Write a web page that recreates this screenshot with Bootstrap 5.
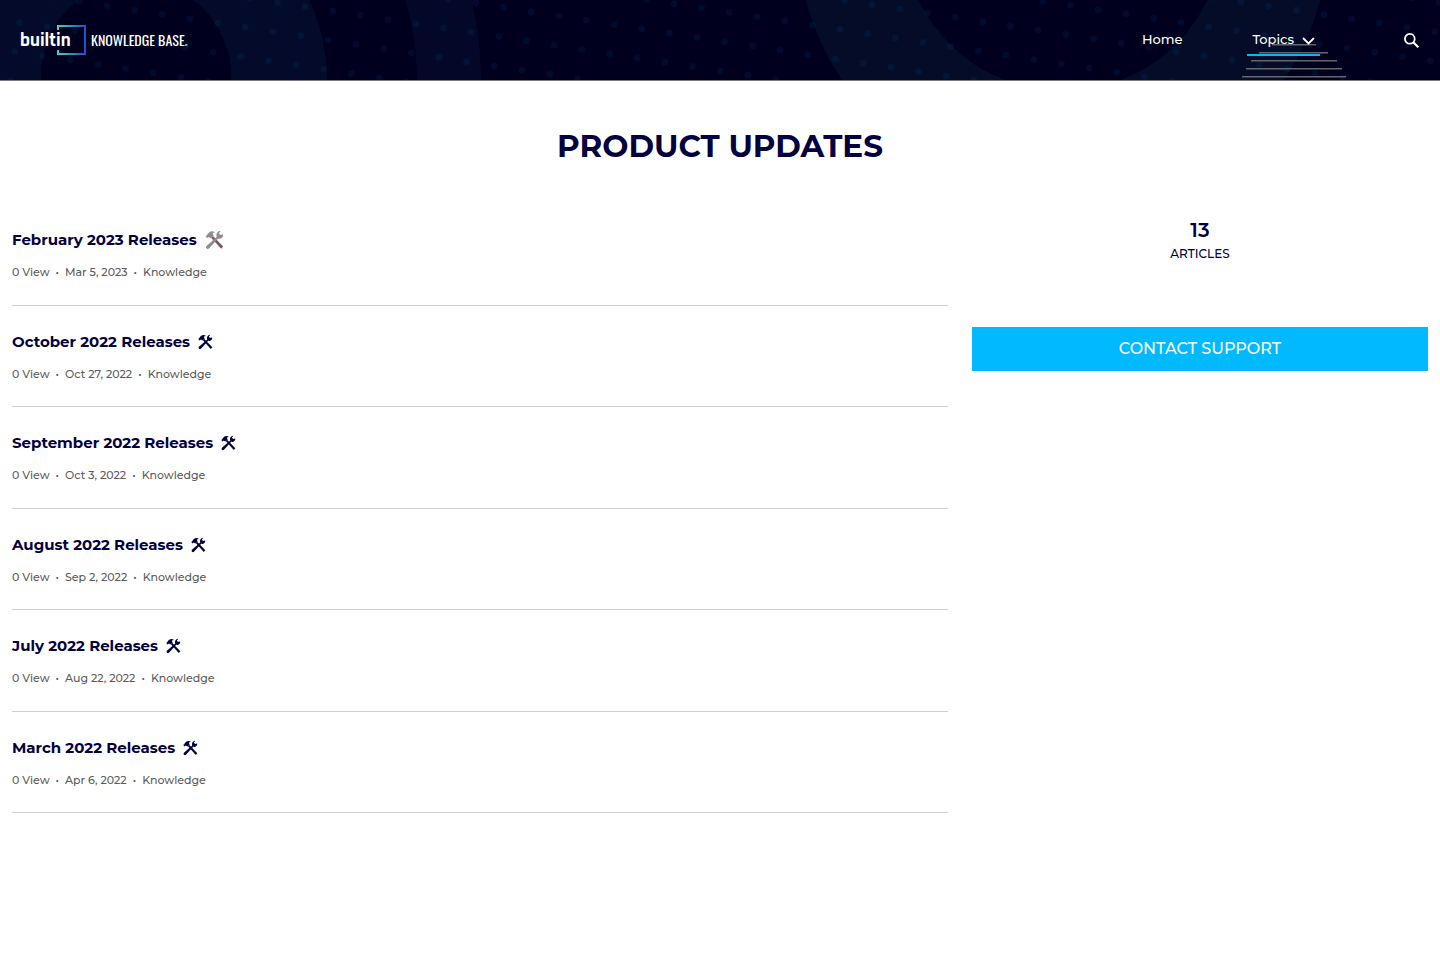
<!DOCTYPE html>
<html lang="en">
<head>
<meta charset="utf-8">
<meta name="viewport" content="width=device-width, initial-scale=1">
<title>Product Updates</title>
<link href="https://cdn.jsdelivr.net/npm/bootstrap@5.3.0/dist/css/bootstrap.min.css" rel="stylesheet">
<style>
  body { font-family: Montserrat, Inter, sans-serif; color: #03003d; background: #fff; }
  .site-header { height: 81px; background: #00001e; border-bottom: 1px solid #77777c; overflow: hidden; }
  .header-art { z-index: 0; }
  .header-bar { z-index: 1; }
  .brand-built { font: 700 19px/32px Rajdhani, "Open Sans", sans-serif; }
  .brand-kb { font: 400 14px/20px Oswald, "Liberation Sans Narrow", sans-serif; }
  .brand-dot { color: #3bd6b4; font-weight: 700; }
  .top-nav { margin-bottom: 2px; }
  .top-link { font-size: 13px; line-height: 20px; font-weight: 500; color: #fff; }
  .home-link { margin-right: 65px; }
  .topics-link { border-bottom: 2px solid #00b9ff; padding: 7px 5px 5px; margin-right: 84px; }
  .page-title { font-size: 31px; line-height: 40px; font-weight: 700; margin: 45px 0 38px; }
  .article-row { border-bottom: 1px solid #d0d0d0; }
  .article-title { font-size: 15px; line-height: 24px; font-weight: 700; margin-bottom: 12px; }
  .article-title a { color: inherit; }
  .tools-icon { margin-left: 7px; }
  .article-meta { font-size: 11px; line-height: 1.5; color: #5c5c5c; font-weight: 500; }
  .article-meta span + span::before { content: "•"; margin: 0 6px; }
  .sidebar-box { padding-top: 12px; }
  .count-number { font-size: 20px; line-height: 28px; font-weight: 600; }
  .count-label { font-size: 12px; line-height: 20px; font-weight: 500; margin-bottom: 63px; }
  .contact-btn, .contact-btn:hover { background: #00b9ff; color: #fff; font-size: 16px; line-height: 24px; font-weight: 500; padding: 10px 12px; }
</style>
</head>
<body>
<header class="site-header position-relative d-flex align-items-center">
  <svg class="header-art position-absolute top-0 start-0 w-100 h-100" aria-hidden="true">
    <defs>
      <pattern id="dots" width="28" height="29.6" patternUnits="userSpaceOnUse" patternTransform="translate(245.3 27.3) rotate(8.8) translate(-14 -14.8)">
        <circle cx="14" cy="14.8" r="3.2" fill="#00508c" fill-opacity=".15"/>
      </pattern>
    </defs>
    <circle cx="138" cy="80" r="343" fill="#040828"/>
    <circle cx="138" cy="80" r="279" fill="#00001e"/>
    <circle cx="138" cy="80" r="189" fill="#040a29"/>
    <circle cx="136" cy="76" r="95" fill="#00001e"/>
    <circle cx="1063" cy="-68" r="266" fill="#040c28"/>
    <circle cx="1063" cy="-69" r="160" fill="#00001e"/>
    <rect width="100%" height="100%" fill="url(#dots)"/>
    <path d="M1272 44.7H1316M1259 52.7H1328M1251 60.7H1337M1246 68.7H1342M1242 76.7H1346" stroke="#77777c" stroke-opacity=".85" stroke-width="1.6"/>
  </svg>
  <div class="header-bar container-fluid position-relative d-flex align-items-center justify-content-between px-3">
    <a href="#" class="d-flex align-items-center text-white text-decoration-none ms-1">
      <span class="position-relative d-block me-1">
        <svg class="d-block" width="67" height="30" viewBox="0 0 67 30" aria-hidden="true">
          <defs><linearGradient id="frame"><stop offset="0" stop-color="#3bd6b4"/><stop offset="1" stop-color="#2052d0"/></linearGradient></defs>
          <path d="M38 5V1H65V29H38V25" fill="none" stroke="url(#frame)" stroke-width="2"/>
        </svg>
        <span class="brand-built position-absolute top-0 start-0">builtin</span>
      </span>
      <span class="brand-kb">KNOWLEDGE BASE<span class="brand-dot">.</span></span>
    </a>
    <nav class="top-nav d-flex align-items-center me-1" aria-label="Main">
      <a href="#" class="top-link home-link text-decoration-none">Home</a>
      <a href="#" class="top-link topics-link text-decoration-none d-flex align-items-center">Topics
        <svg class="ms-2 mt-1" width="13" height="8" viewBox="0 0 13 8" fill="none" stroke="#fff" stroke-width="1.8" aria-hidden="true"><path d="M1 1L6.500 6.500L12 1"/></svg>
      </a>
      <button type="button" class="btn border-0 p-0 mt-1" aria-label="Search">
        <svg class="d-block" width="16" height="16" viewBox="0 0 16 16" fill="none" stroke="#fff" stroke-width="1.8" aria-hidden="true"><circle cx="5.800" cy="5.800" r="4.900"/><path d="M9.500 9.500L14.300 14.300" stroke-width="2.200"/></svg>
      </button>
    </nav>
  </div>
</header>

<svg class="d-none" aria-hidden="true">
  <symbol id="tools" viewBox="0 0 16 16">
    <path d="M10.200 5.400C9.500 3.500 10.400 1.300 12.600.8L13.200 1 11.900 2.600 13 4 14.900 3.400 15.300 3.700C15.300 6 13.300 7.400 11.200 6.800L4.200 14.600C3.500 15.400 2.500 15.300 2 14.800 1.400 14.200 1.500 13.300 2.200 12.600Z" fill="currentColor"/>
    <path d="M1.200 5.100L2.600 6.400 3.800 5.600 5.200 6.600 7.800 4.200 6.700 3C7.300 2.300 8.100 2 9 2.100 7.400.7 5.400.8 3.900 2.100L2.500 3.500 2.600 4Z" fill="currentColor"/>
  </symbol>
  <symbol id="handle" viewBox="0 0 16 16">
    <path d="M5.700 6.100L7.100 4.700 15.300 13.200 13.800 14.900Z" fill="currentColor"/>
  </symbol>
</svg>

<main class="container-fluid">
  <h1 class="page-title text-center">PRODUCT UPDATES</h1>
  <div class="row">
    <section class="col-8">
      <article class="article-row py-4">
        <h2 class="article-title d-flex align-items-center"><a href="#" class="text-decoration-none">February 2023 Releases</a><svg class="tools-icon" width="20" height="20" role="img" aria-label="tools"><use href="#handle" color="#7b5750"/><use href="#tools" color="#8e8e90"/></svg></h2>
        <div class="article-meta"><span>0 View</span><span>Mar 5, 2023</span><span>Knowledge</span></div>
      </article>
      <article class="article-row py-4">
        <h2 class="article-title d-flex align-items-center"><a href="#" class="text-decoration-none">October 2022 Releases</a><svg class="tools-icon" width="16" height="16" role="img" aria-label="tools"><use href="#handle"/><use href="#tools"/></svg></h2>
        <div class="article-meta"><span>0 View</span><span>Oct 27, 2022</span><span>Knowledge</span></div>
      </article>
      <article class="article-row py-4">
        <h2 class="article-title d-flex align-items-center"><a href="#" class="text-decoration-none">September 2022 Releases</a><svg class="tools-icon" width="16" height="16" role="img" aria-label="tools"><use href="#handle"/><use href="#tools"/></svg></h2>
        <div class="article-meta"><span>0 View</span><span>Oct 3, 2022</span><span>Knowledge</span></div>
      </article>
      <article class="article-row py-4">
        <h2 class="article-title d-flex align-items-center"><a href="#" class="text-decoration-none">August 2022 Releases</a><svg class="tools-icon" width="16" height="16" role="img" aria-label="tools"><use href="#handle"/><use href="#tools"/></svg></h2>
        <div class="article-meta"><span>0 View</span><span>Sep 2, 2022</span><span>Knowledge</span></div>
      </article>
      <article class="article-row py-4">
        <h2 class="article-title d-flex align-items-center"><a href="#" class="text-decoration-none">July 2022 Releases</a><svg class="tools-icon" width="16" height="16" role="img" aria-label="tools"><use href="#handle"/><use href="#tools"/></svg></h2>
        <div class="article-meta"><span>0 View</span><span>Aug 22, 2022</span><span>Knowledge</span></div>
      </article>
      <article class="article-row py-4">
        <h2 class="article-title d-flex align-items-center"><a href="#" class="text-decoration-none">March 2022 Releases</a><svg class="tools-icon" width="16" height="16" role="img" aria-label="tools"><use href="#handle"/><use href="#tools"/></svg></h2>
        <div class="article-meta"><span>0 View</span><span>Apr 6, 2022</span><span>Knowledge</span></div>
      </article>
    </section>
    <aside class="col-4 text-center">
      <div class="sidebar-box">
        <div class="count-number">13</div>
        <div class="count-label">ARTICLES</div>
        <button type="button" class="btn contact-btn w-100 rounded-0 border-0">CONTACT SUPPORT</button>
      </div>
    </aside>
  </div>
</main>
<script src="https://cdn.jsdelivr.net/npm/bootstrap@5.3.0/dist/js/bootstrap.bundle.min.js"></script>
</body>
</html>
